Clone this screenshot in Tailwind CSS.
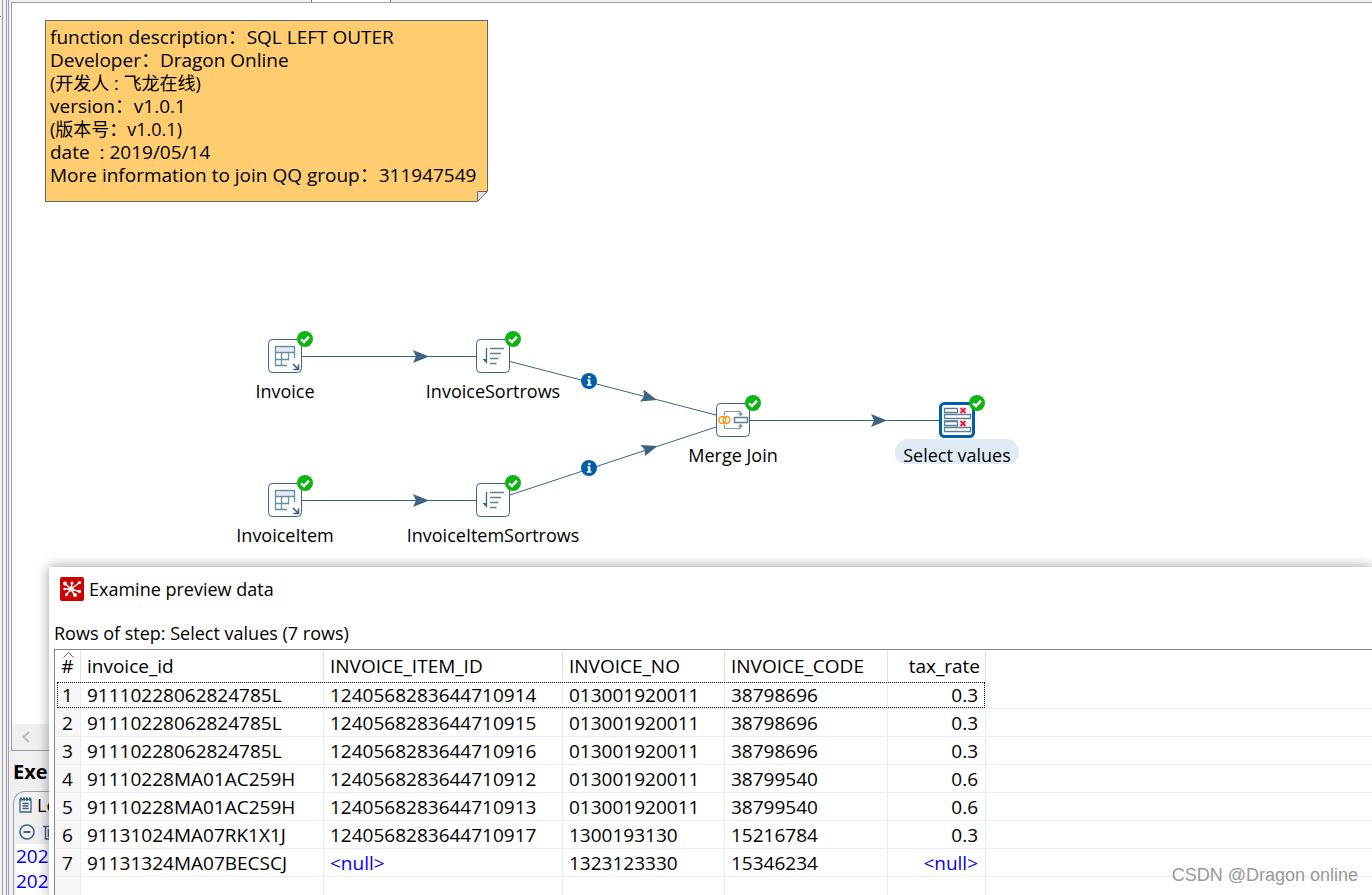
<!DOCTYPE html>
<html lang="en">
<head>
<meta charset="utf-8">
<title>Examine preview data</title>
<script src="https://cdn.jsdelivr.net/npm/@tailwindcss/browser@4"></script>
</head>
<body class="relative flex h-screen overflow-hidden bg-[#f0f0f0] font-['Open_Sans','Noto_Sans_CJK_SC',sans-serif] text-[18px] leading-[23px] text-black">

<svg class="hidden" aria-hidden="true">
  <symbol id="ok" viewBox="0 0 16 16"><circle cx="8" cy="8" r="8" fill="#0eb414"/><path d="M4 8.3l3 2.7 5-5.4" fill="none" stroke="#fff" stroke-width="2.4"/></symbol>
  <symbol id="info" viewBox="0 0 16 16"><circle cx="8" cy="8" r="8" fill="#005daa"/><path d="M7 3h2.4v2.2H7zM6 6.4h3.4v4.8h1.1v1.5H5.8v-1.5h1.3V7.900H6z" fill="#fff"/></symbol>
  <symbol id="table-input" viewBox="0 0 34 34">
    <rect x=".5" y=".5" width="33" height="33" rx="4" fill="#fff" stroke="#3d6480"/>
    <rect x="8" y="8" width="18" height="5" fill="#e1eef5"/>
    <path d="M19 26.500H7.500v-19h19V19M7.500 13.500h19M7.500 20.500H21M13.500 13.500v13M20.500 13.500v8" fill="none" stroke="#6b8aa2" stroke-width="1.300"/>
    <path d="M25 25l5 5M30.500 25.500v5h-5" fill="none" stroke="#3d6480" stroke-width="1.700"/>
  </symbol>
  <symbol id="sort" viewBox="0 0 34 34">
    <rect x=".5" y=".5" width="33" height="33" rx="4" fill="#fff" stroke="#3d6480"/>
    <path d="M10.500 9v13" stroke="#3d6480" stroke-width="1.300"/><path d="M6.500 20h4.500v5z" fill="#3d6480"/>
    <path d="M14 9.500h14M14 14.500h11M14 19.500h8.500M14 24.500h6.500" stroke="#5f7f98" stroke-width="1.400"/>
  </symbol>
  <symbol id="merge" viewBox="0 0 34 34">
    <rect x=".5" y=".5" width="33" height="33" rx="4" fill="#fff" stroke="#3d6480"/>
    <path d="M8.500 12.500v-4h16v3M8.500 21.500v4h16v-3" fill="none" stroke="#8199ac"/>
    <path d="M22 10h5l-2.500 3.500zM22 24h5l-2.500-3.500z" fill="#8199ac"/>
    <rect x="18.500" y="14.500" width="13" height="5" fill="#fff" stroke="#5f7f98" stroke-width="1.500"/>
    <ellipse cx="6.300" cy="17" rx="3.300" ry="3.600" transform="rotate(25 6.300 17)" fill="none" stroke="#f79a1c" stroke-width="1.600"/>
    <ellipse cx="10.500" cy="17" rx="3.300" ry="3.600" transform="rotate(25 10.500 17)" fill="none" stroke="#f79a1c" stroke-width="1.600"/>
  </symbol>
  <symbol id="select" viewBox="0 0 36 36">
    <rect x="1.500" y="1.500" width="33" height="33" rx="4" fill="#fff" stroke="#005daa" stroke-width="3"/>
    <path d="M5 12h14v4H5zM5 18h14v2H5z" fill="#8aa0b2"/>
    <path d="M5.500 6.500h13v4h-13zM5.500 12.500h26v4h-26zM5.500 19.500h13v4h-13zM5.500 25.500h26v4h-26z" fill="#fff" stroke="#5f7f98" stroke-width="1.300"/>
    <path d="M21.500 6l5 5M26.500 6l-5 5M21.500 19l5 5M26.500 19l-5 5" stroke="#e8173c" stroke-width="1.900"/>
  </symbol>
</svg>

<div class="flex w-[11px] shrink-0">
  <div class="w-[3px] border-r border-[#a0a0aa] pt-4"><div class="h-px w-px bg-[#888]"></div></div>
  <div class="w-1 border-r border-[#a0a0aa]"></div>
  <div class="w-[2px] border-r border-[#a0a0aa]"></div>
</div>

<main class="flex min-w-0 flex-1 flex-col">
  <div class="flex h-[2px] shrink-0 pl-[300px]"><div class="w-20 border-x border-[#777] bg-white"></div></div>

  <section class="flex min-h-0 flex-1 flex-col border-t border-b border-l border-[#a0a0aa] bg-white" aria-label="Transformation canvas">
    <div class="relative min-h-0 flex-1">
      <div class="absolute top-[17px] left-[33px] w-[443px] border border-[#666] bg-[#ffcd70] px-1 pt-[5px] pb-[14px] text-[19px] [&_p]:whitespace-pre">
        <p>function description：SQL LEFT OUTER</p>
        <p>Developer：Dragon Online</p>
        <p class="text-[18px]">(开发人 : 飞龙在线)</p>
        <p>version：v1.0.1</p>
        <p class="text-[18px]">(版本号：v1.0.1)</p>
        <p>date  : 2019/05/14</p>
        <p>More information to join QQ group：311947549</p>
        <svg class="absolute -right-px -bottom-px" width="11" height="11" viewBox="0 0 11 11"><path d="M0 0h11v11H0z" fill="#fff"/><path d="M.5 10.500V.5h10z" fill="#e0e0e0" stroke="#666"/></svg>
      </div>

      <svg class="absolute top-0 left-0" width="1000" height="560" viewBox="12 3 1000 560" aria-hidden="true">
        <g stroke="#3d6480" fill="none"><path d="M302 356.500h174M302 500.500h174M510 361.500L716 415M510 495L716 427M750 420.500h190"/></g>
        <g fill="#3d6480">
          <path id="head" d="M413 350l16 6.500-16 6.500 3-6.500z"/>
          <use href="#head" y="144"/>
          <use href="#head" x="458" y="64"/>
          <path d="M643.500 389.500L657 400l-17 1.500 4-5z"/>
          <path d="M640.500 445l17 1-12.500 10-.5-6.500z"/>
        </g>
      </svg>
      <svg class="absolute top-[370px] left-[569px] size-4"><use href="#info"/></svg>
      <svg class="absolute top-[457px] left-[569px] size-4"><use href="#info"/></svg>

      <div class="absolute top-[336px] left-[173px] flex w-[200px] flex-col items-center gap-[7px]">
        <div class="relative"><svg class="size-[34px]"><use href="#table-input"/></svg><svg class="absolute -top-2 -right-[11px] size-4"><use href="#ok"/></svg></div>
        <span>Invoice</span>
      </div>
      <div class="absolute top-[336px] left-[381px] flex w-[200px] flex-col items-center gap-[7px]">
        <div class="relative"><svg class="size-[34px]"><use href="#sort"/></svg><svg class="absolute -top-2 -right-[11px] size-4"><use href="#ok"/></svg></div>
        <span>InvoiceSortrows</span>
      </div>
      <div class="absolute top-[480px] left-[173px] flex w-[200px] flex-col items-center gap-[7px]">
        <div class="relative"><svg class="size-[34px]"><use href="#table-input"/></svg><svg class="absolute -top-2 -right-[11px] size-4"><use href="#ok"/></svg></div>
        <span>InvoiceItem</span>
      </div>
      <div class="absolute top-[480px] left-[381px] flex w-[200px] flex-col items-center gap-[7px]">
        <div class="relative"><svg class="size-[34px]"><use href="#sort"/></svg><svg class="absolute -top-2 -right-[11px] size-4"><use href="#ok"/></svg></div>
        <span>InvoiceItemSortrows</span>
      </div>
      <div class="absolute top-[400px] left-[621px] flex w-[200px] flex-col items-center gap-[7px]">
        <div class="relative"><svg class="size-[34px]"><use href="#merge"/></svg><svg class="absolute -top-2 -right-[11px] size-4"><use href="#ok"/></svg></div>
        <span>Merge Join</span>
      </div>
      <div class="absolute top-[399px] left-[845px] flex w-[200px] flex-col items-center">
        <div class="relative"><svg class="size-9"><use href="#select"/></svg><svg class="absolute -top-[7px] -right-[10px] size-4"><use href="#ok"/></svg></div>
        <span class="mt-px h-[25px] rounded-t-[13px] rounded-b-[10px] bg-[#e1ebf5] px-2 pt-[5px]">Select values</span>
      </div>
    </div>
    <button class="flex h-[26px] w-full items-center bg-[#f0f0f0] pl-[9px]" aria-label="Scroll left">
      <svg width="10" height="12" viewBox="0 0 10 12"><path d="M8 1L2.500 6 8 11" fill="none" stroke="#bfbfbf" stroke-width="2.200"/></svg>
    </button>
  </section>

  <section class="flex h-36 shrink-0 flex-col pl-[2px]" aria-label="Execution results">
    <h2 class="pt-[9px] pb-[7px] text-[20px] leading-[24px] font-bold">Exe</h2>
    <div class="flex min-h-0 flex-1 flex-col rounded-tl-xl border-t border-l border-[#a0a0a0] pl-[2px]">
      <button class="flex h-[26px] shrink-0 items-center gap-[5px] pl-[3px]">
        <svg width="13" height="16" viewBox="0 0 13 16" fill="none" stroke="#3d6480" stroke-width="1.300"><path d="M1 2.500h11v12.500H1zM3.500 6.500h6M3.500 9h6M3.500 11.500h6"/><path d="M1 2h11" stroke-width="3" stroke-dasharray="2 1"/></svg>
        <span>Lo</span>
      </button>
      <div class="flex h-[26px] shrink-0 items-center gap-2 pt-px pl-[3px]">
        <button aria-label="Collapse"><svg class="block" width="16" height="16" viewBox="0 0 16 16" fill="none" stroke="#3d6480"><circle cx="8" cy="8" r="7" stroke-width="1.600"/><path d="M4.500 8h7" stroke-width="2"/></svg></button>
        <button aria-label="Clear log"><svg class="block" width="14" height="16" viewBox="0 0 14 16" fill="none" stroke="#3d6480" stroke-width="1.500"><path d="M0 2.500h14M2.500 3v12h9V3M5.500 5v8M8.500 5v8"/></svg></button>
      </div>
      <div class="flex-1 overflow-hidden bg-white text-[19px] leading-[25px] text-[#0000f0]"><p>202</p><p>202</p></div>
    </div>
  </section>
</main>

<div role="dialog" aria-labelledby="title" class="absolute top-[567px] right-0 bottom-0 left-[49px] overflow-hidden bg-white shadow-[0_0_12px_rgba(0,0,0,0.4)]">
  <header class="flex h-11 items-center gap-[5px] pl-[11px]">
    <svg width="24" height="24" viewBox="0 0 24 24"><rect width="24" height="24" rx="2" fill="#cd0000"/><g stroke="#fff" stroke-width="1.500"><path d="M11 12L5.500 7M11 12l1-6M11 12l8-6M11 12H5M11 12l-4 5M11 12l3.500 6M11 12l8 2.500"/></g><g fill="#fff"><circle cx="5" cy="6.500" r="2"/><circle cx="12" cy="6" r="1.500"/><circle cx="19.500" cy="5.500" r="1.600"/><circle cx="4.500" cy="12" r="1.200"/><circle cx="6.500" cy="17.500" r="1.500"/><circle cx="15" cy="18" r="2"/><circle cx="19.500" cy="14.500" r="1.700"/><circle cx="11" cy="12" r="2.500"/></g></svg>
    <h1 id="title">Examine preview data</h1>
  </header>
  <p class="pt-[11px] pb-1 pl-[5px]">Rows of step: Select values (7 rows)</p>
  <div class="ml-[5px] h-[260px] border-t border-l border-[#828790] bg-[linear-gradient(to_right,#f7f7f7_25px,#e6ebf5_25px,#e6ebf5_26px,transparent_26px)]">
    <table class="w-full table-fixed border-separate border-spacing-0 text-[19px]">
      <colgroup><col class="w-[26px]"><col class="w-[243px]"><col class="w-[239px]"><col class="w-[162px]"><col class="w-[163px]"><col class="w-[98px]"><col></colgroup>
      <thead class="[&_th]:h-[31px] [&_th]:border-r [&_th]:border-[#e2e2e2] [&_th]:bg-white [&_th]:px-[6px] [&_th]:pt-px [&_th]:text-left [&_th]:font-normal">
        <tr><th class="relative !px-0 !text-center">#<svg class="absolute top-[2px] left-2" width="11" height="6" viewBox="0 0 11 6"><path d="M.5 5.500l5-5 5 5" fill="none" stroke="#666"/></svg></th><th>invoice_id</th><th>INVOICE_ITEM_ID</th><th>INVOICE_NO</th><th>INVOICE_CODE</th><th class="!pr-[5px] !text-right">tax_rate</th><th class="!border-0"></th></tr>
      </thead>
      <tbody class="[&_td]:h-7 [&_td]:border-r [&_td]:border-b [&_td]:border-r-[#e6ebf5] [&_td]:border-b-[#ededf0] [&_td]:px-[6px] [&_td]:pt-[2px] [&_td:first-child]:px-0 [&_td:first-child]:text-center [&_td:first-child]:bg-[#f7f7f7] [&_td:nth-child(6)]:text-right [&_td:nth-child(6)]:pr-[7px] [&_td:last-child]:border-r-0">
        <tr class="relative"><td>1<span class="absolute top-px left-[2px] h-[26px] w-[928px] border border-dotted border-black"></span></td><td>91110228062824785L</td><td>1240568283644710914</td><td>013001920011</td><td>38798696</td><td>0.3</td><td></td></tr>
        <tr><td>2</td><td>91110228062824785L</td><td>1240568283644710915</td><td>013001920011</td><td>38798696</td><td>0.3</td><td></td></tr>
        <tr><td>3</td><td>91110228062824785L</td><td>1240568283644710916</td><td>013001920011</td><td>38798696</td><td>0.3</td><td></td></tr>
        <tr><td>4</td><td>91110228MA01AC259H</td><td>1240568283644710912</td><td>013001920011</td><td>38799540</td><td>0.6</td><td></td></tr>
        <tr><td>5</td><td>91110228MA01AC259H</td><td>1240568283644710913</td><td>013001920011</td><td>38799540</td><td>0.6</td><td></td></tr>
        <tr><td>6</td><td>91131024MA07RK1X1J</td><td>1240568283644710917</td><td>1300193130</td><td>15216784</td><td>0.3</td><td></td></tr>
        <tr><td>7</td><td>91131324MA07BECSCJ</td><td class="text-[#0000f0]">&lt;null&gt;</td><td>1323123330</td><td>15346234</td><td class="text-[#0000f0]">&lt;null&gt;</td><td></td></tr>
        <tr><td></td><td></td><td></td><td></td><td></td><td></td><td></td></tr>
      </tbody>
    </table>
  </div>
  <p class="absolute right-[14px] bottom-2 font-['Liberation_Sans'] text-[18px] leading-[23px] text-[#999]">CSDN @Dragon online</p>
</div>
</body>
</html>
